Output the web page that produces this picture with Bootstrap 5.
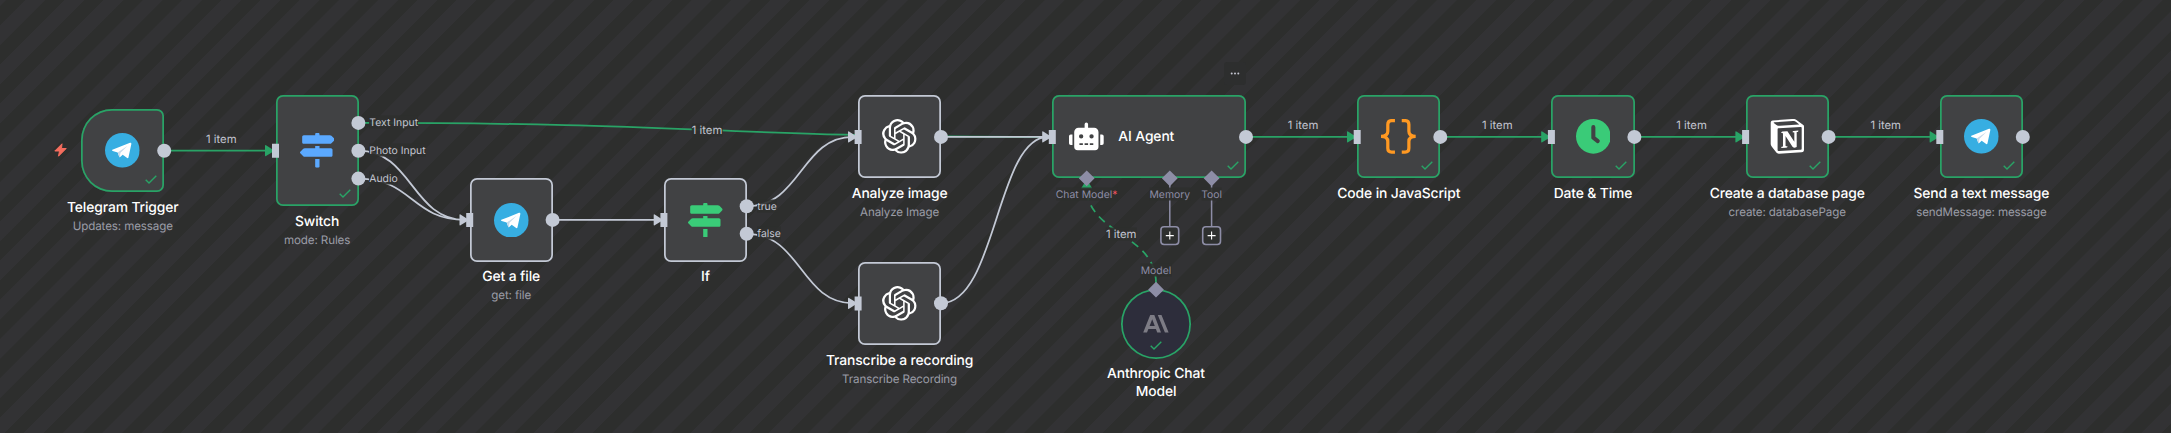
<!DOCTYPE html>
<html lang="en" data-bs-theme="dark">
<head>
<meta charset="utf-8">
<meta name="viewport" content="width=device-width, initial-scale=1">
<title>Workflow</title>
<link rel="stylesheet" href="https://cdn.jsdelivr.net/npm/bootstrap@5.3.0/dist/css/bootstrap.min.css">
<style>
  :root { --ok: #29a366; --line: #c3c9d5; --sub: #8d8da6; --node: #414244; --canvas: #2e302f; }
  body { font-family: Inter, "Liberation Sans", sans-serif; margin: 0; text-rendering: geometricPrecision; -webkit-font-smoothing: antialiased; }
  .canvas { width: 2171px; height: 433px; background: repeating-linear-gradient(135deg, #323234 0 4px, #2d2e2d 4.5px 17.6px, #323234 18.1px 27.73px); }
  .layer { left: 0; top: 0; width: 2171px; height: 433px; pointer-events: none; }
  .node { width: 83.2px; height: 83.2px; background: var(--node); box-shadow: inset 0 0 0 1.75px var(--edge, var(--line)); border-radius: 7px; }
  .node.done { --edge: var(--ok); }
  .glyph { width: 34.7px; height: 34.7px; }
  .tick { position: absolute; right: 7.6px; bottom: 8.6px; width: 12px; height: 9px; }
  .caption { top: calc(100% + 7.8px); left: 50%; transform: translateX(-50%); white-space: nowrap; text-align: center; }
  .caption b { display: block; font-weight: 500; font-size: 13.87px; letter-spacing: -.12px; line-height: 17.3px; color: #fff; }
  .caption span { display: block; font-size: 11.6px; letter-spacing: -.12px; line-height: 17px; margin-top: .6px; color: #9a9ca6; }
  .tag { transform: translate(-50%, -50%); white-space: nowrap; line-height: 13px; }
  .tag-item { font-size: 11.3px; color: #c3c5d0; }
  .tag-out { transform: translateY(-50%); font-size: 10.4px; color: #c3c5d0; }
  .tag-in { font-size: 10.4px; color: #8d8da6; }
  .tag-required { color: #f4525f; }
  .veil { background: rgba(46,47,46,.9); }

  #trigger { left: 81.2px; top: 109.1px; border-radius: 31px 7px 7px 31px; }
  #switch { left: 275.5px; top: 95.2px; height: 111px; }
  #getfile { left: 469.6px; top: 178.4px; }
  #if { left: 663.8px; top: 178.4px; }
  #analyze { left: 858px; top: 95.2px; }
  #transcribe { left: 858px; top: 261.8px; }
  #agent { left: 1052.2px; top: 95.2px; width: 194.2px; padding-left: 17.2px; gap: 14.3px; }
  #agent .title { font-weight: 500; font-size: 13.87px; letter-spacing: -.12px; color: #fff; padding-top: 1.6px; }
  #code { left: 1357.2px; top: 95.2px; }
  #date { left: 1551.4px; top: 95.2px; }
  #notion { left: 1745.6px; top: 95.2px; }
  #send { left: 1939.8px; top: 95.2px; }
  #claude { left: 1121.3px; top: 289.3px; width: 69.4px; height: 69.4px; border-radius: 50%; background: #2d2d3b; }
  #claude .tick { right: 29px; bottom: 8.6px; }
  #bolt { left: 54px; top: 143px; width: 13px; height: 14px; }
  #more { left: 1224px; top: 62px; width: 22px; height: 23px; background: #2d2e2e; border-radius: 3px; }
  #l1 { left: 221.3px; top: 139px; } #l2 { left: 707px; top: 130px; } #l3 { left: 1303px; top: 125px; }
  #l4 { left: 1497.3px; top: 125px; } #l5 { left: 1691.5px; top: 125px; } #l6 { left: 1885.7px; top: 125px; } #l7 { left: 1121.2px; top: 234.2px; }
  #o1 { left: 369.3px; top: 122.3px; } #o2 { left: 369.3px; top: 150.3px; } #o3 { left: 369.3px; top: 178.2px; }
  #o4 { left: 757.3px; top: 206.3px; } #o5 { left: 757.3px; top: 233.4px; }
  #i1 { left: 1086.6px; top: 194px; } #i2 { left: 1169.8px; top: 194px; } #i3 { left: 1211.6px; top: 194px; } #i4 { left: 1156px; top: 270px; }
</style>
</head>
<body class="overflow-hidden">
<svg class="d-none">
  <symbol id="s-telegram" viewBox="0 0 104 104"><circle cx="52" cy="52" r="52" fill="#37aee2"/><path fill="#fff" d="M22 50.500 75 29.500Q79.500 28.500 79 33L70.500 72.500Q69.500 77 65.500 74.500L53 65.500 46.500 71.500Q43.500 74 42.500 70.500L38 58.500 23 54Q19 52 22 50.500Z"/><path fill="#c8daea" d="M38 58.500 68 38.500 46.500 59.500 44.500 73Q43 73 42.300 70.500Z"/></symbol>
  <symbol id="s-signs" viewBox="0 0 512 512"><path fill="currentColor" d="M507.310 84.690L464 41.370c-6-6-14.140-9.370-22.630-9.370H288V16c0-8.840-7.160-16-16-16h-32c-8.840 0-16 7.160-16 16v16H56c-13.250 0-24 10.750-24 24v80c0 13.250 10.750 24 24 24h385.370c8.490 0 16.620-3.370 22.630-9.370l43.310-43.310c6.250-6.260 6.250-16.380 0-22.630zM224 496c0 8.840 7.160 16 16 16h32c8.840 0 16-7.160 16-16V384h-64v112zm232-272H288v-32h-64v32H70.630c-8.490 0-16.620 3.370-22.630 9.370L4.690 276.690c-6.250 6.250-6.250 16.380 0 22.630L48 342.630c6 6 14.140 9.370 22.630 9.370H456c13.250 0 24-10.750 24-24v-80c0-13.250-10.750-24-24-24z"/></symbol>
  <symbol id="s-openai" viewBox="0 0 24 24"><path fill="#fff" d="M22.2819 9.8211a5.9847 5.9847 0 0 0-.5157-4.9108 6.0462 6.0462 0 0 0-6.5098-2.9A6.0651 6.0651 0 0 0 4.9807 4.1818a5.9847 5.9847 0 0 0-3.9977 2.9 6.0462 6.0462 0 0 0 .7427 7.0966 5.98 5.98 0 0 0 .511 4.9107 6.051 6.051 0 0 0 6.5146 2.9001A5.9847 5.9847 0 0 0 13.2599 24a6.0557 6.0557 0 0 0 5.7718-4.2058 5.9894 5.9894 0 0 0 3.9977-2.9001 6.0557 6.0557 0 0 0-.7475-7.0729zm-9.022 12.6081a4.4755 4.4755 0 0 1-2.8764-1.0408l.1419-.0804 4.7783-2.7582a.7948.7948 0 0 0 .3927-.6813v-6.7369l2.02 1.1686a.071.071 0 0 1 .038.052v5.5826a4.504 4.504 0 0 1-4.4945 4.4944zm-9.6607-4.1254a4.4708 4.4708 0 0 1-.5346-3.0137l.142.0852 4.783 2.7582a.7712.7712 0 0 0 .7806 0l5.8428-3.3685v2.3324a.0804.0804 0 0 1-.0332.0615L9.74 19.9502a4.4992 4.4992 0 0 1-6.1408-1.6464zM2.3408 7.8956a4.485 4.485 0 0 1 2.3655-1.9728V11.6a.7664.7664 0 0 0 .3879.6765l5.8144 3.3543-2.0201 1.1685a.0757.0757 0 0 1-.071 0l-4.8303-2.7865A4.504 4.504 0 0 1 2.3408 7.872zm16.5963 3.8558L13.1038 8.364 15.1192 7.2a.0757.0757 0 0 1 .071 0l4.8303 2.7913a4.4944 4.4944 0 0 1-.6765 8.1042v-5.6772a.79.79 0 0 0-.407-.667zm2.0107-3.0231l-.142-.0852-4.7735-2.7818a.7759.7759 0 0 0-.7854 0L9.409 9.2297V6.8974a.0662.0662 0 0 1 .0284-.0615l4.8303-2.7866a4.4992 4.4992 0 0 1 6.6802 4.66zM8.3065 12.863l-2.02-1.1638a.0804.0804 0 0 1-.038-.0567V6.0742a4.4992 4.4992 0 0 1 7.3757-3.4537l-.142.0805L8.704 5.459a.7948.7948 0 0 0-.3927.6813zm1.0976-2.3654l2.602-1.4998 2.6069 1.4998v2.9994l-2.5974 1.4997-2.6067-1.4997Z"/></symbol>
  <symbol id="s-tick" viewBox="0 0 12 9"><path d="M.7 4.700 4 8 11.300.7" fill="none" stroke="#29a366" stroke-width="1.400"/></symbol>
</svg>

<main class="canvas position-relative overflow-hidden">
  <svg class="layer position-absolute" viewBox="0 0 2171 433" fill="none" stroke-width="1.75">
    <defs>
      <path id="head" d="M-7 -4.900Q-7 -6 -6 -5.400L1 -1V1L-6 5.400Q-7 6 -7 4.900Z" stroke="none"/>
    </defs>
    <g stroke="#29a366">
      <path d="M164 150.700H268M358.600 122.900C705.500 122.900 705.500 136.900 1048 136.900M1246 136.900H1352M1440 136.900H1546M1634 136.900H1740M1828 136.900H1935"/>
      <path d="M1156 283C1156 234 1086.700 234 1086.700 187" stroke-dasharray="8 5.870"/>
    </g>
    <g stroke="#c3c9d5">
      <path d="M358.600 150.700C412 150.700 412 219.900 465 219.900M358.600 178.600C412 178.600 412 219.900 465 219.900M552 219.900H659M747 206.200C801 206.200 801 136.900 853 136.900M747 233.800C801 233.800 801 303.300 853 303.300M941 136.900H1048M941 303.300C996.500 303.300 996.500 136.900 1048 136.900"/>
    </g>
    <path d="M1169.800 180V226M1211.600 180V226" stroke="#8d8da6" stroke-width="1.500"/>
    <g fill="#29a366">
      <use href="#head" x="272" y="150.700"/><use href="#head" x="1354" y="136.900"/><use href="#head" x="1548.200" y="136.900"/><use href="#head" x="1742.400" y="136.900"/><use href="#head" x="1936.600" y="136.900"/>
      <use href="#head" transform="translate(1086.700 182) rotate(-90)"/>
    </g>
    <g fill="#c3c9d5">
      <use href="#head" x="466.500" y="219.900"/><use href="#head" x="660.700" y="219.900"/><use href="#head" x="855" y="136.900"/><use href="#head" x="855" y="303.300"/><use href="#head" x="1049.200" y="136.900"/>
    </g>
  </svg>

  <svg id="bolt" class="position-absolute" viewBox="0 0 13 14"><path fill="#f46d5e" stroke="#f46d5e" stroke-linejoin="round" d="M8 .8.800 8H5.500L4.500 13.200 12.200 5.500H7.500Z"/></svg>

  <div id="trigger" class="node done position-absolute d-flex align-items-center justify-content-center"><svg class="glyph"><use href="#s-telegram"/></svg><svg class="tick"><use href="#s-tick"/></svg>
    <div class="caption position-absolute"><b>Telegram Trigger</b><span>Updates: message</span></div></div>
  <div id="switch" class="node done position-absolute d-flex align-items-center justify-content-center"><svg class="glyph" color="#5ba9ff"><use href="#s-signs"/></svg><svg class="tick"><use href="#s-tick"/></svg>
    <div class="caption position-absolute"><b>Switch</b><span>mode: Rules</span></div></div>
  <div id="getfile" class="node position-absolute d-flex align-items-center justify-content-center"><svg class="glyph"><use href="#s-telegram"/></svg>
    <div class="caption position-absolute"><b>Get a file</b><span>get: file</span></div></div>
  <div id="if" class="node position-absolute d-flex align-items-center justify-content-center"><svg class="glyph" color="#3acb78"><use href="#s-signs"/></svg>
    <div class="caption position-absolute"><b>If</b></div></div>
  <div id="analyze" class="node position-absolute d-flex align-items-center justify-content-center"><svg class="glyph"><use href="#s-openai"/></svg>
    <div class="caption position-absolute"><b>Analyze image</b><span>Analyze Image</span></div></div>
  <div id="transcribe" class="node position-absolute d-flex align-items-center justify-content-center"><svg class="glyph"><use href="#s-openai"/></svg>
    <div class="caption position-absolute"><b>Transcribe a recording</b><span>Transcribe Recording</span></div></div>
  <div id="agent" class="node done position-absolute d-flex align-items-center">
    <svg class="glyph" viewBox="0 0 640 512"><path fill="#fff" d="M32 224H64V416H32A32 32 0 0 1 0 384V256A32 32 0 0 1 32 224ZM544 176V448a64 64 0 0 1-64 64H160a64 64 0 0 1-64-64V176a80 80 0 0 1 80-80H288V32a32 32 0 0 1 64 0V96H464A80 80 0 0 1 544 176ZM264 256a40 40 0 1 0-40 40A40 40 0 0 0 264 256Zm-8 128H192v32h64Zm96 0H288v32h64ZM456 256a40 40 0 1 0-40 40A40 40 0 0 0 456 256Zm-8 128H384v32h64ZM640 256V384a32 32 0 0 1-32 32H576V224h32A32 32 0 0 1 640 256Z"/></svg>
    <span class="title">AI Agent</span><svg class="tick"><use href="#s-tick"/></svg></div>
  <div id="code" class="node done position-absolute d-flex align-items-center justify-content-center">
    <svg class="glyph" viewBox="0 0 102 102"><path fill="none" stroke="#ff9922" stroke-width="9.500" d="M41 4.700H31Q20 4.700 20 16V36Q20 51 0 51Q20 51 20 66V86Q20 97.300 31 97.300H41M61 4.700H71Q82 4.700 82 16V36Q82 51 102 51Q82 51 82 66V86Q82 97.300 71 97.300H61"/></svg><svg class="tick"><use href="#s-tick"/></svg>
    <div class="caption position-absolute"><b>Code in JavaScript</b></div></div>
  <div id="date" class="node done position-absolute d-flex align-items-center justify-content-center">
    <svg class="glyph" viewBox="0 0 102 102"><circle cx="51" cy="51" r="51" fill="#3acb78"/><path d="M51 24V55L64 65" fill="none" stroke="#414244" stroke-width="12" stroke-linecap="round" stroke-linejoin="round"/></svg><svg class="tick"><use href="#s-tick"/></svg>
    <div class="caption position-absolute"><b>Date &amp; Time</b></div></div>
  <div id="notion" class="node done position-absolute d-flex align-items-center justify-content-center">
    <svg class="glyph" viewBox="0 0 24 24"><path fill="#fff" d="M4.459 4.208c.746.606 1.026.56 2.428.466l13.215-.793c.28 0 .047-.28-.046-.326L17.86 1.968c-.42-.326-.981-.7-2.055-.607L3.010 2.295c-.466.046-.56.28-.374.466zm.793 3.080v13.904c0 .747.373 1.027 1.214.98l14.523-.84c.841-.046.935-.56.935-1.167V6.354c0-.606-.233-.933-.748-.887l-15.177.887c-.56.047-.747.327-.747.933zm14.337.745c.093.42 0 .84-.42.888l-.7.14v10.264c-.608.327-1.168.514-1.635.514-.748 0-.935-.234-1.495-.933l-4.577-7.186v6.952L12.210 19s0 .84-1.168.84l-3.222.186c-.093-.186 0-.653.327-.746l.84-.233V9.854L7.822 9.760c-.094-.42.14-1.026.793-1.073l3.456-.233 4.764 7.279v-6.440l-1.215-.139c-.093-.514.28-.887.747-.933zM1.936 1.035l13.310-.98c1.634-.14 2.055-.047 3.082.7l4.249 2.986c.7.513.934.653.934 1.213v16.378c0 1.026-.373 1.634-1.680 1.726l-15.458.934c-.98.047-1.448-.093-1.962-.747l-3.129-4.060c-.56-.747-.793-1.306-.793-1.960V2.667c0-.839.374-1.540 1.447-1.632z"/></svg><svg class="tick"><use href="#s-tick"/></svg>
    <div class="caption position-absolute"><b>Create a database page</b><span>create: databasePage</span></div></div>
  <div id="send" class="node done position-absolute d-flex align-items-center justify-content-center"><svg class="glyph"><use href="#s-telegram"/></svg><svg class="tick"><use href="#s-tick"/></svg>
    <div class="caption position-absolute"><b>Send a text message</b><span>sendMessage: message</span></div></div>
  <div id="claude" class="node done position-absolute d-flex align-items-center justify-content-center">
    <svg width="26" height="18" viewBox="0 0 26 18"><path fill="#7d7c85" fill-rule="evenodd" d="M7.200 0H11.300L18 17.600H14.200L12.900 14H5.400L4 17.600H.2ZM9.200 4.200 6.600 10.900H11.800ZM14.800 0H18.500L25.600 17.600H21.900Z"/></svg><svg class="tick"><use href="#s-tick"/></svg>
    <div class="caption position-absolute"><b>Anthropic Chat<br>Model</b></div></div>

  <div id="more" class="position-absolute d-flex align-items-center justify-content-center"><svg width="10" height="3" viewBox="0 0 10 3" fill="#c3c5d0"><circle cx="1.700" cy="1.500" r="1"/><circle cx="5" cy="1.500" r="1"/><circle cx="8.300" cy="1.500" r="1"/></svg></div>

  <div id="l1" class="tag tag-item position-absolute">1 item</div><div id="l2" class="tag tag-item veil position-absolute">1 item</div><div id="l3" class="tag tag-item position-absolute">1 item</div><div id="l4" class="tag tag-item position-absolute">1 item</div><div id="l5" class="tag tag-item position-absolute">1 item</div><div id="l6" class="tag tag-item position-absolute">1 item</div><div id="l7" class="tag tag-item veil position-absolute">1 item</div>
  <div id="o1" class="tag tag-out veil position-absolute">Text Input</div><div id="o2" class="tag tag-out veil position-absolute">Photo Input</div><div id="o3" class="tag tag-out veil position-absolute">Audio</div><div id="o4" class="tag tag-out veil position-absolute">true</div><div id="o5" class="tag tag-out veil position-absolute">false</div>
  <div id="i1" class="tag tag-in veil position-absolute">Chat Model<span class="tag-required">*</span></div><div id="i2" class="tag tag-in veil position-absolute">Memory</div><div id="i3" class="tag tag-in veil position-absolute">Tool</div><div id="i4" class="tag tag-in veil position-absolute">Model</div>

  <svg class="layer position-absolute" viewBox="0 0 2171 433">
    <g fill="#c3c9d5">
      <circle cx="164.200" cy="150.700" r="7"/><circle cx="358.400" cy="122.900" r="7"/><circle cx="358.400" cy="150.700" r="7"/><circle cx="358.400" cy="178.600" r="7"/><circle cx="552.600" cy="219.900" r="7"/><circle cx="746.700" cy="206.200" r="7"/><circle cx="746.700" cy="233.800" r="7"/><circle cx="941" cy="136.900" r="7"/><circle cx="941" cy="303.300" r="7"/><circle cx="1246" cy="136.900" r="7"/><circle cx="1440.300" cy="136.900" r="7"/><circle cx="1634.400" cy="136.900" r="7"/><circle cx="1828.600" cy="136.900" r="7"/><circle cx="2022.800" cy="136.900" r="7"/>
      <path d="M272 143.700h7v14h-7zM466.200 213h7v14h-7zM660.400 213h7v14h-7zM854.600 130h7v14h-7zM854.600 296.400h7v14h-7zM1048.800 130h7v14h-7zM1353.700 130h7v14h-7zM1547.900 130h7v14h-7zM1742.100 130h7v14h-7zM1936.300 130h7v14h-7z"/>
    </g>
    <path fill="#8d8da6" d="M1086.700 170.400l7.900 7.900-7.900 7.900-7.900-7.900zM1169.800 170.400l7.900 7.900-7.900 7.900-7.900-7.900zM1211.600 170.400l7.900 7.900-7.900 7.900-7.900-7.900zM1156 281.800l7.900 7.900-7.900 7.900-7.900-7.900z"/>
    <g fill="#2e302f" stroke="#8d8da6" stroke-width="1.600"><rect x="1160.900" y="226.700" width="17.800" height="17.800" rx="3.200"/><rect x="1202.700" y="226.700" width="17.800" height="17.800" rx="3.200"/></g>
    <path stroke="#fff" stroke-width="1.100" d="M1165.800 235.600h8M1169.800 231.600v8M1207.600 235.600h8M1211.600 231.600v8"/>
  </svg>
</main>
<script src="https://cdn.jsdelivr.net/npm/bootstrap@5.3.0/dist/js/bootstrap.bundle.min.js"></script>
</body>
</html>
